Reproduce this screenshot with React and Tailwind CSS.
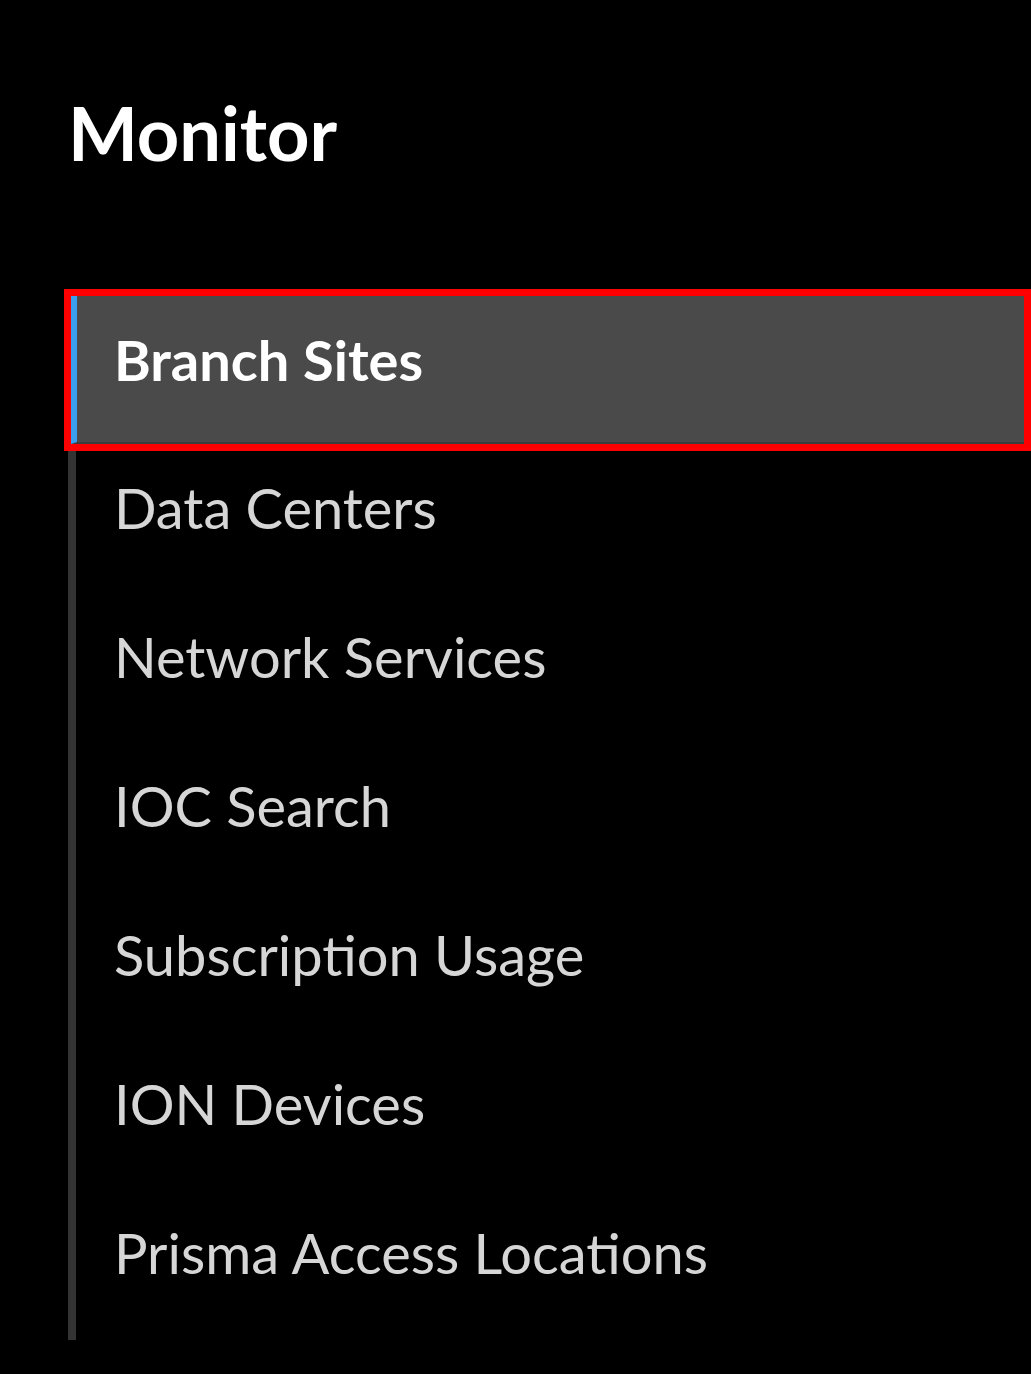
// App.jsx
// Monitor side navigation with the selected "Branch Sites" entry

const items = [
  "Branch Sites",
  "Data Centers",
  "Network Services",
  "IOC Search",
  "Subscription Usage",
  "ION Devices",
  "Prisma Access Locations",
];

function NavItem({ label, active }) {
  if (active) {
    return (
      <div className="-ml-[5px] h-[148px] border-l-[6px] border-b-2 border-l-[#3b9ff0] border-b-[#3d3d3d] bg-[#4a4a4a] pl-[37px] pt-[36px] outline-[7px] outline-solid outline-[#ff0000]">
        <span className="block text-[56px] font-bold leading-[56px] text-white">
          {label}
        </span>
      </div>
    );
  }

  return (
    <div className="h-[149px] pl-[38px] pt-[36px]">
      <span className="block text-[56px] leading-[56px] text-[#d6d6d6]">
        {label}
      </span>
    </div>
  );
}

export default function App() {
  return (
    <div
      className="min-h-[1374px] w-[1031px] overflow-hidden bg-black"
      style={{ fontFamily: "Lato, 'Open Sans', sans-serif" }}
    >
      <div className="pl-[68px] pt-[96px]">
        <h1 className="text-[74px] font-bold leading-[74px] text-white">
          Monitor
        </h1>
      </div>

      <nav className="ml-[68px] mr-[7px] mt-[126px] border-l-[8px] border-[#333333] pb-[2px]">
        {items.map((label, i) => (
          <NavItem key={label} label={label} active={i === 0} />
        ))}
      </nav>
    </div>
  );
}
